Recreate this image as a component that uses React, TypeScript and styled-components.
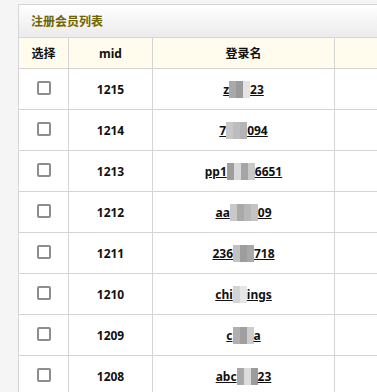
import React from "react"
import styled, { createGlobalStyle } from "styled-components"

const GlobalStyle = createGlobalStyle`
  html, body {
    margin: 0;
    padding: 0;
    background: #f5f5f5;
    overflow: hidden;
  }
  body {
    font-family: "Noto Sans", "Noto Sans CJK SC", sans-serif;
  }
`

type Member = {
  mid: number
  head: string
  tail: string
  blur: string[]
}

const members: Member[] = [
  { mid: 1215, head: "z", tail: "23", blur: ["#a9a9a9", "#9a9a9a", "#e4e4e4"] },
  { mid: 1214, head: "7", tail: "094", blur: ["#c8c8c8", "#bdbdbd", "#b4b4b4"] },
  { mid: 1213, head: "pp1", tail: "6651", blur: ["#9d9d9d", "#d8d8d8", "#a5a5a5", "#c9c9c9"] },
  { mid: 1212, head: "aa", tail: "09", blur: ["#c9c9c9", "#a9a9a9", "#b7b7b7", "#c4c4c4"] },
  { mid: 1211, head: "236", tail: "718", blur: ["#c2c2c2", "#9d9d9d", "#a8a8a8"] },
  { mid: 1210, head: "chi", tail: "ings", blur: ["#d4d4d4", "#e6e6e6"] },
  { mid: 1209, head: "c", tail: "a", blur: ["#b0b0b0", "#9f9f9f", "#cdcdcd"] },
  { mid: 1208, head: "abc", tail: "23", blur: ["#a8a8a8", "#dcdcdc", "#9c9c9c"] },
]

export default function App() {
  return (
    <>
      <GlobalStyle />
      <Page>
        <Panel>
          <TitleBar>注册会员列表</TitleBar>
          <Grid>
            <HeadCell>选择</HeadCell>
            <HeadCell>mid</HeadCell>
            <HeadCell>登录名</HeadCell>
            <HeadCell last />
            {members.map((m) => (
              <React.Fragment key={m.mid}>
                <Cell>
                  <Check type="checkbox" />
                </Cell>
                <Cell>{m.mid}</Cell>
                <Cell>
                  <NameLink href="#">
                    {m.head}
                    <Mosaic>
                      {m.blur.map((c, i) => (
                        <Tile key={i} style={{ background: c }} />
                      ))}
                    </Mosaic>
                    {m.tail}
                  </NameLink>
                </Cell>
                <Cell last />
              </React.Fragment>
            ))}
          </Grid>
        </Panel>
      </Page>
    </>
  )
}

const Page = styled.div`
  padding: 4px 0 0 18px;
  height: 392px;
  box-sizing: border-box;
  overflow: hidden;
`

const Panel = styled.div`
  border: 1px solid #d6d6d6;
  border-right: none;
  background: #fff;
`

const TitleBar = styled.div`
  height: 32px;
  display: flex;
  align-items: center;
  padding-left: 12px;
  font-size: 12px;
  font-weight: 700;
  color: #6f6400;
  background: linear-gradient(#ffffff, #ebebeb);
  border-bottom: 1px solid #d6d6d6;
`

const Grid = styled.div`
  display: grid;
  grid-template-columns: 50px 84px 182px 1fr;
  grid-auto-rows: 41px;
  grid-template-rows: 31px;
`

const Cell = styled.div<{ last?: boolean }>`
  box-sizing: border-box;
  display: flex;
  align-items: center;
  justify-content: center;
  border-right: ${(p) => (p.last ? "none" : "1px solid #d4d4d4")};
  border-bottom: 1px solid #d4d4d4;
  font-size: 12px;
  font-weight: 700;
  color: #111;
`

const HeadCell = styled(Cell)`
  background: #fffcee;
`

const Check = styled.input`
  appearance: none;
  margin: 0;
  width: 14px;
  height: 14px;
  border: 2px solid #8d8d8d;
  border-radius: 2px;
  box-sizing: border-box;
  background: #fff;
  position: relative;
  top: -1px;
`

const NameLink = styled.a`
  display: inline-flex;
  align-items: center;
  color: #111;
  text-decoration: underline;
`

const Mosaic = styled.span`
  display: inline-flex;
  height: 17px;
`

const Tile = styled.span`
  display: inline-block;
  width: 7px;
  height: 100%;
`
